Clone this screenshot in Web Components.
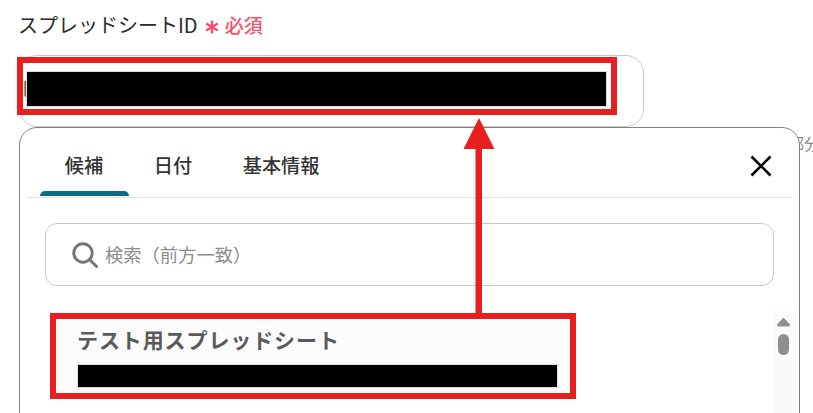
<!DOCTYPE html>
<html lang="ja">
<head>
<meta charset="utf-8">
<title>スプレッドシートID</title>
<style>
html,body{margin:0;padding:0;background:#fff;overflow:hidden}
body{width:813px;height:413px;font-family:"Noto Sans CJK JP","Noto Sans",sans-serif}
</style>
</head>
<body>
<x-form-page>
  <x-field-label slot="label" required="必須">スプレッドシートID</x-field-label>
  <x-id-input slot="input">l</x-id-input>
  <x-helper-text slot="helper">部分</x-helper-text>
  <x-picker-panel slot="panel">
    <x-picker-tabs slot="tabs">
      <x-tab active>候補</x-tab>
      <x-tab>日付</x-tab>
      <x-tab>基本情報</x-tab>
    </x-picker-tabs>
    <x-search-box slot="search">検索（前方一致）</x-search-box>
    <x-suggestion slot="list">テスト用スプレッドシート</x-suggestion>
  </x-picker-panel>
  <x-callout slot="notes" style="left:17px;top:57px;width:600px;height:58px"></x-callout>
  <x-callout slot="notes" style="left:50px;top:313px;width:526px;height:86px"></x-callout>
  <x-up-arrow slot="notes" style="left:463px;top:118px"></x-up-arrow>
</x-form-page>
<script>
function def(name, css, html){
  customElements.define(name, class extends HTMLElement{
    constructor(){
      super();
      this.attachShadow({mode:'open'}).innerHTML = '<style>'+css+'</style>'+html;
    }
  });
}
def('x-form-page',
 `:host{display:block;position:relative;width:813px;height:413px;overflow:hidden;background:#fff}
  .col{display:flex;flex-direction:column;padding-left:19px}`,
 `<div class="col"><slot name="label"></slot><slot name="input"></slot><slot name="helper"></slot></div>
  <slot name="panel"></slot><slot name="notes"></slot>`);

def('x-field-label',
 `:host{display:flex;align-items:center;height:48px;padding-bottom:7px;margin-left:-1px;font-size:20px;color:#2b2b2b;white-space:nowrap}
  .star{margin-left:7px;width:14px;height:14px;display:block;margin-top:5px}
  .req{margin-left:6px;font-size:19px;font-weight:500;color:#f7526d;line-height:1}`,
 `<slot></slot>
  <svg class="star" viewBox="0 0 14 14" fill="none" stroke="#fb4c69" stroke-width="2.3"><path d="M7 0.5V13.5M1.2 3.4L12.8 10.6M12.8 3.4L1.2 10.6"/></svg>
  <span class="req">必須</span>`);

def('x-id-input',
 `:host{display:block;box-sizing:border-box;width:625px;height:72px;border:1px solid #c9c9c9;border-radius:18px;background:#fff;padding:15.5px 0 0 2.5px;font-size:20px;line-height:34px;color:#666}
  .row{display:flex;align-items:flex-start}
  .txt{width:4.5px;white-space:nowrap}
  .bar{position:relative;width:579px;height:34px;background:#000;outline:1px solid #ddd}`,
 `<div class="row"><div class="txt"><slot></slot></div><div class="bar"></div></div>`);

def('x-helper-text',
 `:host{display:block;margin:6px 0 0 769px;font-size:16px;line-height:20px;color:#8a8a8a;white-space:nowrap}`,
 `<slot></slot>`);

def('x-picker-panel',
 `:host{display:flex;flex-direction:column;box-sizing:border-box;position:absolute;left:19px;top:127px;width:781px;height:320px;border:1.5px solid #808080;border-radius:18px;background:#fff;padding:0 6px}
  .search{padding:25px 19px 0 19px}
  .list{margin-top:25px;display:flex;justify-content:space-between;align-items:flex-start}`,
 `<slot name="tabs"></slot>
  <div class="search"><slot name="search"></slot></div>
  <div class="list"><slot name="list"></slot><x-scroll-rail></x-scroll-rail></div>
  <x-close-icon></x-close-icon>`);

def('x-picker-tabs',
 `:host{display:flex;align-items:flex-end;box-sizing:border-box;height:70px;border-bottom:1.5px solid #e4e4e4;padding-left:13.5px}`,
 `<slot></slot>`);

customElements.define('x-tab', class extends HTMLElement{
  constructor(){
    super();
    const a=this.hasAttribute('active');
    this.attachShadow({mode:'open'}).innerHTML=`<style>
      :host{display:flex;flex-direction:column;align-items:center;padding:0 25.3px;position:relative;height:100%;justify-content:flex-start;box-sizing:border-box;font-size:19.2px;font-weight:500;color:#333;line-height:28px;padding-top:23px;white-space:nowrap}
      .ink{position:absolute;left:0;right:-1px;bottom:1px;height:5.5px;border-radius:5px 5px 0 0;background:#0b6a85}
    </style><slot></slot>${a?'<div class="ink"></div>':''}`;
  }
});

def('x-close-icon',
 `:host{display:block;position:absolute;left:729.5px;top:26.5px;width:22px;height:22px}
  svg{display:block}`,
 `<svg width="22" height="22" viewBox="0 0 22 22" fill="none" stroke="#000" stroke-width="2.6"><path d="M1.5 1.5L20.5 20.5M20.5 1.5L1.5 20.5"/></svg>`);

def('x-search-box',
 `:host{display:flex;align-items:center;box-sizing:border-box;height:63px;border:1px solid #c9c9c9;border-radius:12px;background:#fff;padding-left:26px;font-size:18.3px;line-height:26px;color:#8c8c8c;white-space:nowrap}
  svg{display:block;margin-right:7px;margin-top:1px}
  span{display:block;margin-top:-2px}`,
 `<svg width="26" height="26" viewBox="0 0 26 26" fill="none" stroke="#767676"><circle cx="11" cy="11" r="9.2" stroke-width="3"/><path d="M17.8 17.8L24.5 24.5" stroke-width="3" stroke-linecap="round"/></svg><span><slot></slot></span>`);

def('x-suggestion',
 `:host{display:block;box-sizing:border-box;width:514px;height:80px;margin:8px 0 0 24px;background:#fbfbfb;padding:4.5px 0 0 28px}
  .t{font-size:21px;font-weight:700;color:#5a5a5a;letter-spacing:.9px;line-height:30px;white-space:nowrap;height:36.5px;margin-left:-1px}
  .bar{width:479px;height:22.5px;background:#000;outline:1px solid #ddd;margin-top:4.5px}`,
 `<div class="t"><slot></slot></div><div class="bar"></div>`);

def('x-scroll-rail',
 `:host{display:flex;flex-direction:column;align-items:center;width:19px;height:110px;background:#fafafa;padding-top:6px;box-sizing:border-box}
  .thumb{width:11px;height:21px;border-radius:5.5px;background:#8f8f8f;margin-top:7px}
  svg{display:block}`,
 `<svg width="13" height="10" viewBox="0 0 13 10"><path d="M6.5 0.5L13 7.5Q13 9.5 11.5 9.5H1.5Q0 9.5 0 7.5Z" fill="#8f8f8f"/></svg><div class="thumb"></div>`);

def('x-callout',
 `:host{display:block;position:absolute;box-sizing:border-box;border:6px solid #e91e1e}`, ``);

def('x-up-arrow',
 `:host{display:block;position:absolute;width:32px;height:196px}
  svg{display:block}`,
 `<svg width="32" height="196" viewBox="0 0 32 196"><path d="M16 0L31.5 31H19V196H12.5V31H0.5Z" fill="#e91e1e"/></svg>`);
</script>
</body>
</html>
